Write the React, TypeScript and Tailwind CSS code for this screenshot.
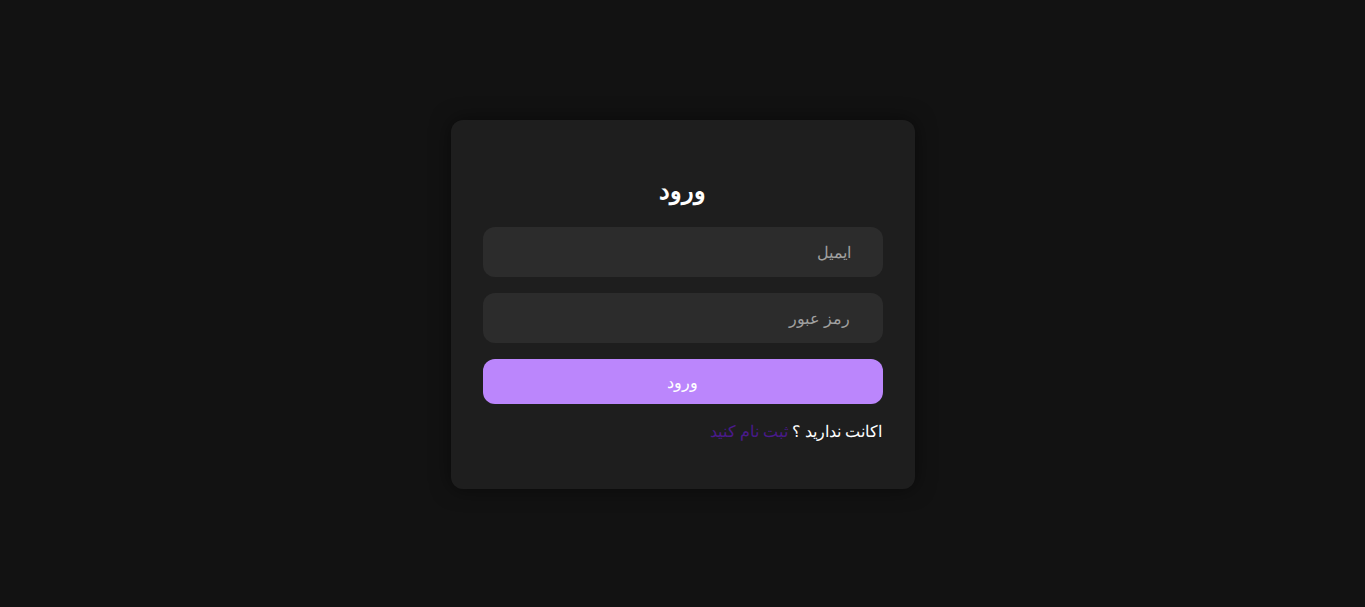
export default function App() {
  return (
    <div
      dir="rtl"
      className="min-h-screen bg-[#121212] flex justify-center pt-[120px] font-sans"
    >
      <div className="w-[464px] h-[369px] bg-[#1e1e1e] rounded-xl px-8 pt-[54px] shadow-[0_0_20px_rgba(0,0,0,0.5)]">
        <h2 className="text-center text-white text-2xl font-bold leading-8 mb-[21px]">ورود</h2>
        <form className="flex flex-col gap-4">
          <input
            type="email"
            placeholder="ایمیل"
            className="h-[50px] w-full rounded-xl bg-[#2c2c2c] px-8 text-base text-white placeholder:text-[#a0a0a0] outline-none"
          />
          <input
            type="password"
            placeholder="رمز عبور"
            className="h-[50px] w-full rounded-xl bg-[#2c2c2c] px-8 text-base text-white placeholder:text-[#a0a0a0] outline-none"
          />
          <button
            type="button"
            className="h-[45px] w-full rounded-xl bg-[#bb86fc] text-white text-base"
          >
            ورود
          </button>
        </form>
        <p className="mt-[15px] text-white text-base leading-6">
          اکانت ندارید ؟ <a className="text-[#4a1a8c]">ثبت نام کنید</a>
        </p>
      </div>
    </div>
  );
}
